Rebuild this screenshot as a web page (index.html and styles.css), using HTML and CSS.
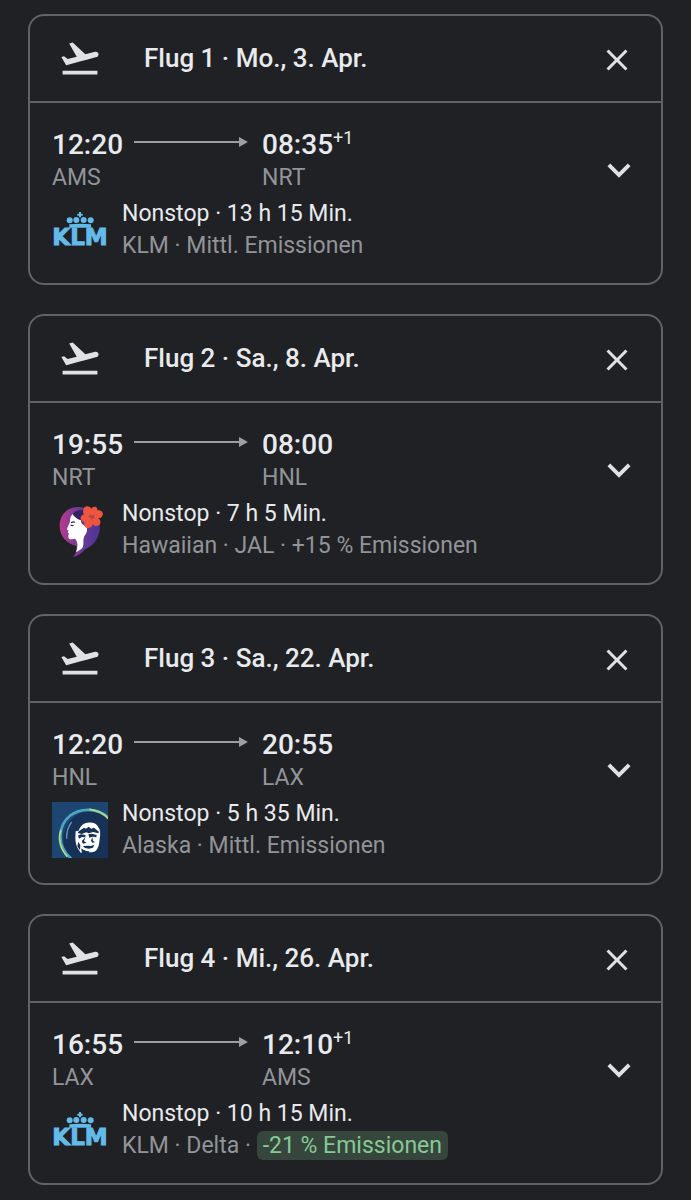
FILE: index.html
```html
<!DOCTYPE html>
<html lang="de">
<head>
    <meta charset="UTF-8">
    <meta name="viewport" content="width=device-width, initial-scale=1.0">
    <title>Flüge</title>
    <link rel="stylesheet" href="styles.css">
</head>
<body>
    <svg class="defs" aria-hidden="true">
        <symbol id="takeoff" viewBox="0 0 24 24">
            <path d="M2.5 19h19v2h-19zm19.57-9.36c-.21-.8-1.04-1.28-1.84-1.06L14.92 10l-6.9-6.43-1.93.51 4.14 7.17-4.97 1.33-1.97-1.54-1.45.39 1.82 3.16.77 1.33 1.6-.43 5.31-1.42 4.35-1.16L21 11.49c.81-.23 1.28-1.05 1.07-1.85z"/>
        </symbol>
        <symbol id="close" viewBox="0 0 24 24">
            <path d="M19 6.41L17.59 5 12 10.59 6.41 5 5 6.41 10.59 12 5 17.59 6.41 19 12 13.41 17.59 19 19 17.59 13.41 12z"/>
        </symbol>
        <symbol id="expand" viewBox="0 0 24 24">
            <path d="M16.59 8.59L12 13.17 7.41 8.59 6 10l6 6 6-6z"/>
        </symbol>
        <symbol id="arrow" viewBox="0 0 114 12">
            <path d="M0 5h105V1l9 5-9 5V7H0z"/>
        </symbol>
        <symbol id="crown" viewBox="0 0 168 78">
            <path d="M81 30h6v5h5v6h-5v5h-6v-5h-5v-6h5z"/>
            <circle cx="53" cy="55" r="9"/>
            <circle cx="73" cy="54" r="9"/>
            <circle cx="95" cy="54" r="9"/>
            <circle cx="116" cy="55" r="9"/>
            <path d="M52 67q32-4 65 0v10H52z"/>
        </symbol>
    </svg>

    <main class="flights">
        <section class="card">
            <header class="card-header">
                <svg class="takeoff"><use href="#takeoff"/></svg>
                <h2>Flug 1 · Mo., 3. Apr.</h2>
                <button class="close" aria-label="Flug 1 entfernen"><svg><use href="#close"/></svg></button>
            </header>
            <div class="card-body">
                <div class="details">
                    <div class="route">
                        <div><div class="time">12:20</div><div class="airport">AMS</div></div>
                        <svg class="arrow"><use href="#arrow"/></svg>
                        <div><div class="time">08:35<sup>+1</sup></div><div class="airport">NRT</div></div>
                    </div>
                    <div class="airline">
                        <div class="logo klm"><svg><use href="#crown"/></svg><span>KLM</span></div>
                        <div>
                            <div class="duration">Nonstop · 13 h 15 Min.</div>
                            <div class="carrier">KLM · Mittl. Emissionen</div>
                        </div>
                    </div>
                </div>
                <button class="expand" aria-label="Details zu Flug 1"><svg><use href="#expand"/></svg></button>
            </div>
        </section>

        <section class="card">
            <header class="card-header">
                <svg class="takeoff"><use href="#takeoff"/></svg>
                <h2>Flug 2 · Sa., 8. Apr.</h2>
                <button class="close" aria-label="Flug 2 entfernen"><svg><use href="#close"/></svg></button>
            </header>
            <div class="card-body">
                <div class="details">
                    <div class="route">
                        <div><div class="time">19:55</div><div class="airport">NRT</div></div>
                        <svg class="arrow"><use href="#arrow"/></svg>
                        <div><div class="time">08:00</div><div class="airport">HNL</div></div>
                    </div>
                    <div class="airline">
                        <svg class="logo" viewBox="21 18 168 168">
                            <linearGradient id="hair" x1="0" y1="0" x2="1" y2="0">
                                <stop offset="0" stop-color="#b83a8c"/>
                                <stop offset=".5" stop-color="#6b3a98"/>
                                <stop offset="1" stop-color="#4b3595"/>
                            </linearGradient>
                            <path fill="url(#hair)" d="M104 33C68 31 43 56 44 91c1 30 20 52 50 59 2 15-3 24-10 33 17-4 28-12 36-23 29-12 44-35 45-72C156 55 137 36 104 33z"/>
                            <path fill="#33245f" d="M80 57c8-12 24-18 39-14l-6 29-15 14z"/>
                            <path fill="#fff" d="M82 54c-6 9-8 16-7 23l-9 21c-2 4 4 4 5 7l-3 4 4 4-2 5c-1 9 2 13 10 12l10-2c9 9 9 25 3 40 8-2 16-8 21-15 3-12-1-22 4-32 8-10 10-18 7-30-10-2-18-8-17-18-10-3-19-9-26-19z"/>
                            <path fill="#33245f" d="M78 78q7-4 13-1l-1 3q-5-2-12 2zM78 86l9 1-4 4-7-1z"/>
                            <path fill="#ef553e" d="M117 37c4-9 17-7 22 1 6-9 20-7 18 5 11-3 19 6 16 14-2 8-9 10-14 9 9 5 10 17 2 22-6 4-14 2-18-4-1 9-11 15-19 11-7-4-8-11-5-17-10 0-15-9-11-16 2-4 6-6 10-7-5-4-5-12-1-18z"/>
                            <path fill="#a8434f" d="M135 56l7 3 8-5-4 8 6 6-9-2-5 6-1-8-8-2z"/>
                        </svg>
                        <div>
                            <div class="duration">Nonstop · 7 h 5 Min.</div>
                            <div class="carrier">Hawaiian · JAL · +15 % Emissionen</div>
                        </div>
                    </div>
                </div>
                <button class="expand" aria-label="Details zu Flug 2"><svg><use href="#expand"/></svg></button>
            </div>
        </section>

        <section class="card">
            <header class="card-header">
                <svg class="takeoff"><use href="#takeoff"/></svg>
                <h2>Flug 3 · Sa., 22. Apr.</h2>
                <button class="close" aria-label="Flug 3 entfernen"><svg><use href="#close"/></svg></button>
            </header>
            <div class="card-body">
                <div class="details">
                    <div class="route">
                        <div><div class="time">12:20</div><div class="airport">HNL</div></div>
                        <svg class="arrow"><use href="#arrow"/></svg>
                        <div><div class="time">20:55</div><div class="airport">LAX</div></div>
                    </div>
                    <div class="airline">
                        <svg class="logo" viewBox="0 0 168 168">
                            <path fill="#1e4673" d="M0 0h168v168H0z"/>
                            <path fill="#173157" d="M52 168C22 130 30 72 70 42c32-22 74-16 98 8v118z"/>
                            <path fill="none" stroke="#4ba6c4" stroke-width="8" d="M58 170C14 133 16 72 54 41c34-26 84-23 118 8"/>
                            <path fill="none" stroke="#b4dc78" stroke-width="5" d="M46 164C22 138 18 106 27 84M112 22c22 2 42 11 58 29"/>
                            <path fill="none" stroke="#6a94ba" stroke-width="4" d="M44 110c-1-22 4-36 15-50"/>
                            <path fill="#fff" d="M80 86c4-13 14-23 26-24 16-3 29 2 34 15 5 7 5 16 4 26l-3 24c-3 15-11 24-22 24-10 0-17-2-21-7l-11 10-9-14c-5-8-8-20-8-32l1-20z"/>
                            <path fill="#173157" d="M80 88l16-11 6 3 8-6 8 6 8-3 9 8 6 4-2 5-16-4-12 4-9-3-12 5-13-3z"/>
                            <path fill="#173157" d="M78 101l8-4 15 2-2 7-9-1-9 5zM109 97l10-2 15 4-1 7-11-2-10 3zM101 104l-5 14 8 4-11 3-4-7zM121 105l2 11 6 5-8 1-4-6zM93 132l16-1 8 1 10-4-4 9-12 3-12-2zM79 119l6 11-1 15-8-12zM88 139l11 8 14 1-9 6-14 4z"/>
                        </svg>
                        <div>
                            <div class="duration">Nonstop · 5 h 35 Min.</div>
                            <div class="carrier">Alaska · Mittl. Emissionen</div>
                        </div>
                    </div>
                </div>
                <button class="expand" aria-label="Details zu Flug 3"><svg><use href="#expand"/></svg></button>
            </div>
        </section>

        <section class="card">
            <header class="card-header">
                <svg class="takeoff"><use href="#takeoff"/></svg>
                <h2>Flug 4 · Mi., 26. Apr.</h2>
                <button class="close" aria-label="Flug 4 entfernen"><svg><use href="#close"/></svg></button>
            </header>
            <div class="card-body">
                <div class="details">
                    <div class="route">
                        <div><div class="time">16:55</div><div class="airport">LAX</div></div>
                        <svg class="arrow"><use href="#arrow"/></svg>
                        <div><div class="time">12:10<sup>+1</sup></div><div class="airport">AMS</div></div>
                    </div>
                    <div class="airline">
                        <div class="logo klm"><svg><use href="#crown"/></svg><span>KLM</span></div>
                        <div>
                            <div class="duration">Nonstop · 10 h 15 Min.</div>
                            <div class="carrier">KLM · Delta · <span class="badge">-21 % Emissionen</span></div>
                        </div>
                    </div>
                </div>
                <button class="expand" aria-label="Details zu Flug 4"><svg><use href="#expand"/></svg></button>
            </div>
        </section>
    </main>
</body>
</html>
```

FILE: styles.css
```css
* {
    box-sizing: border-box;
}

body {
    margin: 0;
    background-color: #202124;
    color: #e8eaed;
    font-family: Roboto, sans-serif;
    font-size: 23px;
    line-height: 32px;
}

.defs {
    position: absolute;
    width: 0;
    height: 0;
}

.flights {
    display: flex;
    flex-direction: column;
    gap: 29px;
    padding: 14px 28px;
}

.card {
    border: 2px solid #5f6368;
    border-radius: 16px;
}

.card-header {
    display: flex;
    align-items: center;
    padding: 20px 26px 21px 28px;
    border-bottom: 2px solid #5f6368;
}

.takeoff {
    width: 44px;
    height: 44px;
    margin-right: 42px;
    fill: #e0e1e5;
}

h2 {
    flex: 1;
    margin: 0;
    font-size: 26px;
    font-weight: 500;
}

button {
    display: block;
    padding: 0;
    border: none;
    background: none;
    color: #e0e1e5;
    cursor: pointer;
}

button svg {
    display: block;
    width: 100%;
    height: 100%;
    fill: currentColor;
}

.close {
    width: 36px;
    height: 36px;
    margin-top: 4px;
}

.card-body {
    display: flex;
    align-items: flex-start;
    padding: 26px 19px 21px 22px;
}

.details {
    flex: 1;
}

.route {
    display: grid;
    grid-template-columns: 68px 114px auto;
    gap: 14px;
    margin-bottom: 4px;
}

.time {
    font-size: 28px;
    font-weight: 500;
    white-space: nowrap;
}

.time sup {
    font-size: 18px;
    font-weight: 400;
    line-height: 0;
}

.airport,
.carrier {
    color: #929498;
}

.airport {
    margin-top: 1px;
}

.arrow {
    width: 114px;
    height: 12px;
    margin-top: 7px;
    fill: #9aa0a6;
}

.airline {
    display: flex;
    align-items: center;
    gap: 14px;
}

.logo {
    width: 56px;
    height: 56px;
}

.klm {
    display: flex;
    flex-direction: column;
    align-items: center;
    color: #62bbe9;
    font-family: "DejaVu Sans", sans-serif;
    font-size: 23px;
    font-weight: bold;
    line-height: 18px;
    -webkit-text-stroke: 1px #62bbe9;
}

.klm svg {
    flex: none;
    width: 56px;
    height: 26px;
    fill: #62bbe9;
}

.badge {
    padding: 1px 6px;
    border-radius: 6px;
    background-color: #37463d;
    color: #87c995;
}

.expand {
    width: 46px;
    height: 46px;
    margin-top: 18px;
}
```
